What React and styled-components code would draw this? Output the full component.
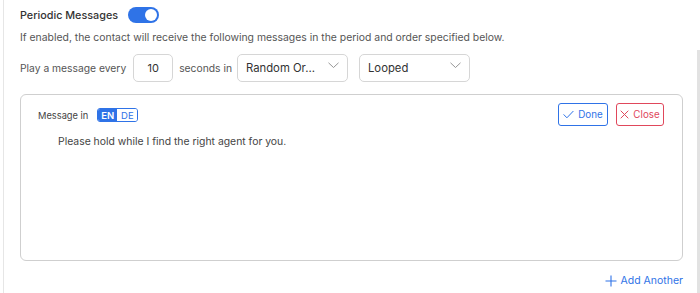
import React from "react";
import styled, { createGlobalStyle } from "styled-components";

const Global = createGlobalStyle`
  html, body { margin: 0; padding: 0; background: #fff; }
  body { font-family: Inter, "Noto Sans", sans-serif; color: #333; }
  * { box-sizing: border-box; }
`;

const Frame = styled.div`
  position: relative;
  height: 293px;
  overflow: hidden;
  background: #fff;
  border-left: 1px solid #e6e6e6;
  margin-left: 3px;
  width: 697px;
`;

const ScrollTrack = styled.div`
  position: absolute;
  right: 0;
  top: 50px;
  bottom: 0;
  width: 3px;
  background: #e2e2e2;
`;

const Content = styled.div`
  padding: 7px 0 0 16px;
  width: 680px;
  display: flex;
  flex-direction: column;
`;

const HeaderRow = styled.div`
  display: flex;
  align-items: center;
  gap: 10px;
  height: 16px;
`;

const Title = styled.span`
  font-size: 10.8px;
  font-weight: 500;
  color: #333;
`;

const Toggle = styled.span`
  width: 31px;
  height: 16px;
  border-radius: 8px;
  background: #2f73e7;
  display: inline-flex;
  align-items: center;
  justify-content: flex-end;
  padding: 2px;
  &::after {
    content: "";
    width: 12px;
    height: 12px;
    border-radius: 50%;
    background: #fff;
  }
`;

const Description = styled.div`
  margin-top: 8px;
  font-size: 10.4px;
  color: #555;
`;

const ControlRow = styled.div`
  margin-top: 10px;
  display: flex;
  align-items: center;
  font-size: 10.3px;
  color: #555;
`;

const NumberBox = styled.div`
  width: 40px;
  height: 28px;
  border: 1px solid #d6d6d6;
  border-radius: 5px;
  display: flex;
  align-items: center;
  justify-content: center;
  font-size: 11px;
  color: #333;
  margin: 0 6px 0 7px;
`;

const Select = styled.div`
  width: 111px;
  height: 28px;
  border: 1px solid #d6d6d6;
  border-radius: 5px;
  display: flex;
  align-items: center;
  justify-content: space-between;
  padding: 0 8px 0 8px;
  font-size: 11.3px;
  color: #333;
  margin-left: ${(p) => p.$ml || 0}px;
`;

const Chevron = () => (
  <svg width="11" height="7" viewBox="0 0 11 7" style={{ marginTop: -6, flexShrink: 0 }}>
    <path d="M0.5 0.8 L5.5 5.5 L10.5 0.8" fill="none" stroke="#8a8a8a" strokeWidth="0.9" />
  </svg>
);

const Card = styled.div`
  margin-top: 12px;
  width: 663px;
  height: 167px;
  border: 1px solid #cfcfcf;
  border-radius: 6px;
  padding: 8px 18px 0 17px;
  display: flex;
  flex-direction: column;
`;

const CardTop = styled.div`
  display: flex;
  align-items: flex-start;
  justify-content: space-between;
`;

const LangRow = styled.div`
  display: flex;
  align-items: center;
  gap: 9px;
  margin-top: 5px;
  font-size: 9.3px;
  color: #444;
`;

const LangSwitch = styled.div`
  display: flex;
  height: 14px;
  border: 1px solid #2f73e7;
  border-radius: 3px;
  overflow: hidden;
`;

const LangOpt = styled.span`
  display: flex;
  align-items: center;
  justify-content: center;
  width: ${(p) => p.$w}px;
  font-size: 9.5px;
  font-weight: ${(p) => (p.$active ? 600 : 400)};
  background: ${(p) => (p.$active ? "#2f73e7" : "#fff")};
  color: ${(p) => (p.$active ? "#fff" : "#2f73e7")};
`;

const Actions = styled.div`
  display: flex;
  gap: 8px;
`;

const ActionButton = styled.button`
  height: 23px;
  padding: 0 5px;
  border: 1px solid ${(p) => p.$color};
  color: ${(p) => p.$color};
  background: #fff;
  border-radius: 3px;
  font-family: inherit;
  font-size: 9.8px;
  display: flex;
  align-items: center;
  gap: 4px;
  width: ${(p) => p.$w}px;
  justify-content: center;
  svg { flex-shrink: 0; }
`;

const MessageText = styled.div`
  margin-top: 9px;
  padding-left: 20px;
  font-size: 10.4px;
  color: #444;
`;

const Footer = styled.div`
  width: 663px;
  display: flex;
  justify-content: flex-end;
  margin-top: 13px;
`;

const AddLink = styled.span`
  display: flex;
  align-items: center;
  gap: 3px;
  color: #2f73e7;
  font-size: 10.5px;
`;

export default function App() {
  return (
    <>
      <Global />
      <Frame>
        <ScrollTrack />
        <Content>
          <HeaderRow>
            <Title>Periodic Messages</Title>
            <Toggle />
          </HeaderRow>
          <Description>
            If enabled, the contact will receive the following messages in the period and order specified below.
          </Description>
          <ControlRow>
            Play a message every
            <NumberBox>10</NumberBox>
            seconds in
            <Select $ml={5}>
              Random Or...
              <Chevron />
            </Select>
            <Select $ml={11}>
              Looped
              <Chevron />
            </Select>
          </ControlRow>
          <Card>
            <CardTop>
              <LangRow>
                Message in
                <LangSwitch>
                  <LangOpt $active $w={19}>EN</LangOpt>
                  <LangOpt $w={20}>DE</LangOpt>
                </LangSwitch>
              </LangRow>
              <Actions>
                <ActionButton $color="#2f73e7" $w={50}>
                  <svg width="11" height="9" viewBox="0 0 11 9">
                    <path d="M0.6 4.4 L3.9 7.8 L10.4 1" fill="none" stroke="#2f73e7" strokeWidth="1" />
                  </svg>
                  Done
                </ActionButton>
                <ActionButton $color="#e0475b" $w={48}>
                  <svg width="9" height="9" viewBox="0 0 9 9">
                    <path d="M0.7 0.7 L8.3 8.3 M8.3 0.7 L0.7 8.3" fill="none" stroke="#e0475b" strokeWidth="1" />
                  </svg>
                  Close
                </ActionButton>
              </Actions>
            </CardTop>
            <MessageText>Please hold while I find the right agent for you.</MessageText>
          </Card>
          <Footer>
            <AddLink>
              <svg width="12" height="12" viewBox="0 0 12 12">
                <path d="M6 0.5 V11.5 M0.5 6 H11.5" fill="none" stroke="#2f73e7" strokeWidth="1.1" />
              </svg>
              Add Another
            </AddLink>
          </Footer>
        </Content>
      </Frame>
    </>
  );
}
